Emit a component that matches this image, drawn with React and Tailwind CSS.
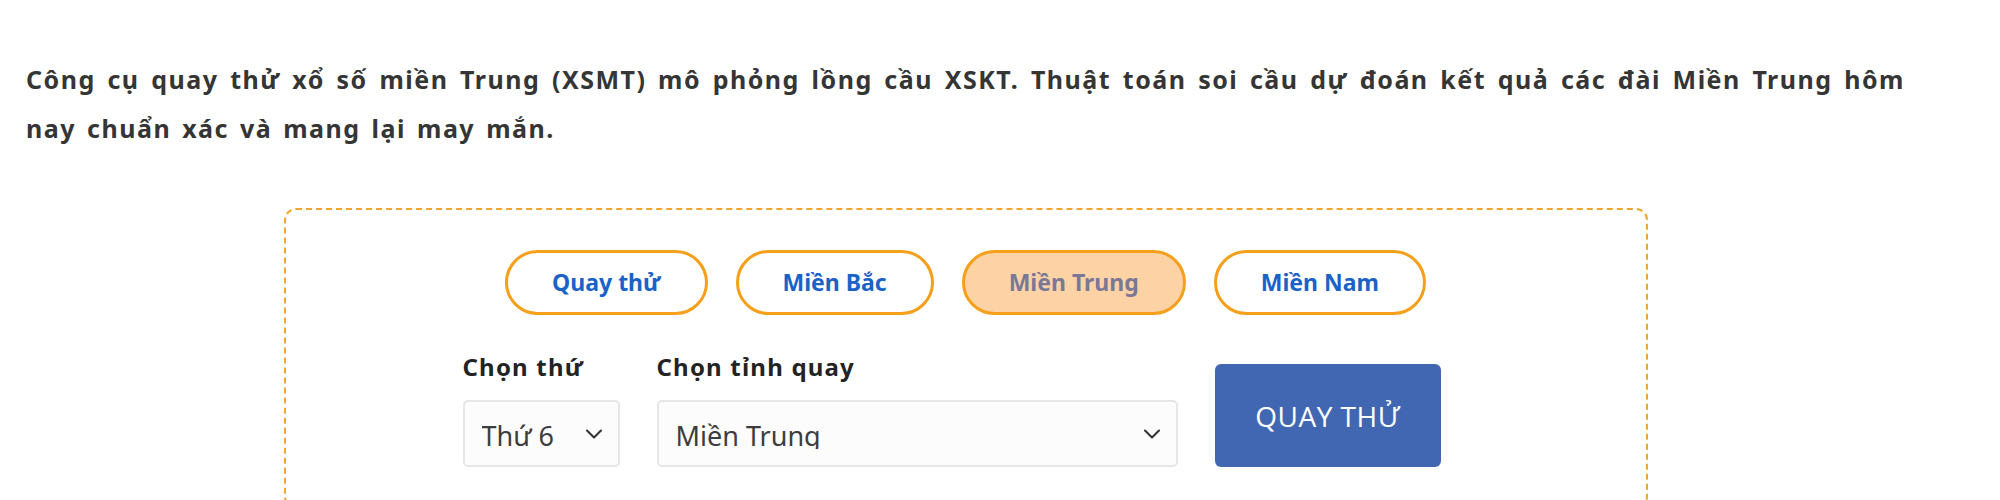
import React, { useState } from 'react';
import { ChevronDown } from 'lucide-react';

const TABS = ['Quay thử', 'Miền Bắc', 'Miền Trung', 'Miền Nam'];

// --- Select box (static look) ---
const FakeSelect = ({ value, className }) => (
    <div className={`h-[67px] flex items-start justify-between pl-[17px] pr-[10px] pt-[17px] border-2 border-[#e6e6e6] rounded-[5px] bg-[#fcfcfc] ${className}`}>
        <span className="block h-[30px] overflow-hidden text-[27px] leading-[34px] text-[#3d3d3d] whitespace-nowrap">{value}</span>
        <ChevronDown size={28} strokeWidth={1.8} className="text-[#333] mt-[1px] shrink-0" />
    </div>
);

export default function App() {
    const [active, setActive] = useState('Miền Trung');

    return (
        <div className="min-h-[500px] bg-white" style={{ fontFamily: '"Noto Sans", Lato, sans-serif' }}>
            <div className="w-[1879px] ml-[26px] pt-[55px]">
                <p className="text-[25px] leading-[49px] font-bold text-[#353535] text-justify tracking-[1.5px] [word-spacing:3px]">
                    Công cụ quay thử xổ số miền Trung (XSMT) mô phỏng lồng cầu XSKT. Thuật toán soi cầu dự đoán kết quả các đài Miền Trung hôm nay chuẩn xác và mang lại may mắn.
                </p>

                <div className="w-[1364px] mx-auto mt-[55px] border-2 border-dashed border-[#f2a531] rounded-[12px] pt-[40px] pb-[40px]">
                    {/* region tabs */}
                    <div className="flex justify-center gap-[28px]">
                        {TABS.map((t) => (
                            <button
                                key={t}
                                onClick={() => setActive(t)}
                                className={`h-[65px] px-[44px] rounded-full border-[3px] border-[#f59f1a] text-[23px] font-bold ${active === t ? 'bg-[#fdd3a5] text-[#7a7896]' : 'bg-white text-[#1b62c7]'}`}
                            >
                                {t}
                            </button>
                        ))}
                    </div>

                    {/* form row */}
                    <div className="flex justify-center items-end gap-[37px] mt-[38px] pr-[28px]">
                        <div className="flex flex-col">
                            <label className="text-[24px] font-bold text-[#232323] leading-[28px] tracking-[1.2px]">Chọn thứ</label>
                            <FakeSelect value="Thứ 6" className="w-[157px] mt-[19px]" />
                        </div>
                        <div className="flex flex-col">
                            <label className="text-[24px] font-bold text-[#232323] leading-[28px] tracking-[1.2px]">Chọn tỉnh quay</label>
                            <FakeSelect value="Miền Trung" className="w-[521px] mt-[19px]" />
                        </div>
                        <button
                            className="w-[226px] h-[103px] rounded-[6px] bg-[#4267b2] text-white text-[28px] font-medium tracking-[0.5px]"
                            style={{ fontFamily: '"Open Sans", "Noto Sans", sans-serif' }}
                        >
                            QUAY THỬ
                        </button>
                    </div>
                </div>
            </div>
        </div>
    );
}
